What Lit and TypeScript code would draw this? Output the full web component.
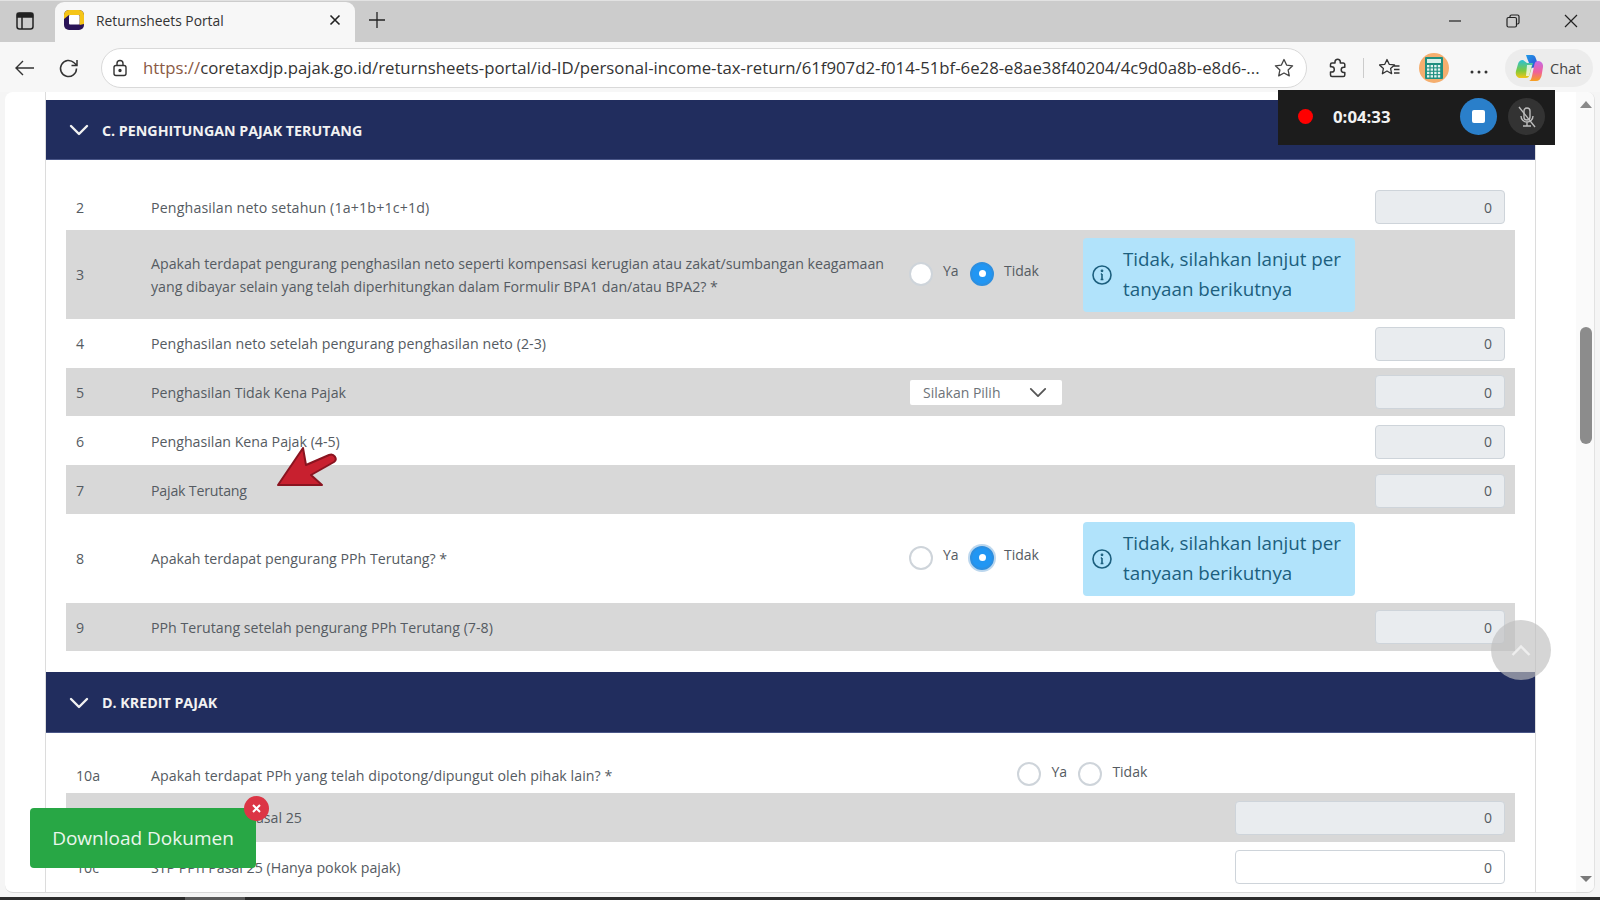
import { LitElement, html, css, svg } from "lit";
import { customElement } from "lit/decorators.js";

const chevron = (w: number, c: string, sw: number) => html`<svg width=${w} height=${Math.round(w * 0.6)} viewBox="0 0 20 12" fill="none" stroke=${c} stroke-width=${sw} stroke-linecap="round" stroke-linejoin="round"><path d="M2 2l8 8 8-8"/></svg>`;

const radio = (on: boolean, glow = false) => html`<span class="radio ${on ? "on" : ""} ${glow ? "glow" : ""}"></span>`;

const radios = (cls: string, glow = false, none = false) => html`<div class="radios ${cls}">
  ${radio(false)}<span class="opt ya">Ya</span>
  ${radio(!none, glow)}<span class="opt">Tidak</span>
</div>`;

const info = html`<div class="info">
  <svg width="20" height="20" viewBox="0 0 20 20" fill="none" stroke="#1c5f7e" stroke-width="1.6"><circle cx="10" cy="10" r="9"/><path d="M10 9v5.500M8.600 14.500h2.800M8.800 9h1.200"/><circle cx="10" cy="5.800" r=".6" fill="#1c5f7e"/></svg>
  <span>Tidak, silahkan lanjut per tanyaan berikutnya</span>
</div>`;

const field = (wide = false, enabled = false) => html`<div class="field ${wide ? "wide" : ""} ${enabled ? "enabled" : ""}">0</div>`;

@customElement("app-root")
export class AppRoot extends LitElement {
  static styles = css`
    :host { display: block; width: 1600px; height: 900px; overflow: hidden; position: relative; background: #f5f5f5; font-family: "Open Sans", "Noto Sans", sans-serif; color: #555b62; }
    * { box-sizing: border-box; }
    .shell { display: flex; flex-direction: column; height: 900px; }
    .tabs { height: 42px; background: #cccccc; display: flex; align-items: flex-end; flex: none; border-top: 1px solid #e2e2e2; }
    .tab-side { width: 55px; height: 41px; display: flex; align-items: center; justify-content: center; padding: 0 5px 2px 0; }
    .tab { width: 300px; height: 40px; background: #f7f7f7; border-radius: 9px 9px 0 0; display: flex; align-items: center; padding: 0 14px 4px 9px; font-size: 13.8px; color: #333; }
    .tab .title { margin-left: 12px; flex: 1; }
    .plus { width: 44px; height: 41px; display: flex; align-items: center; justify-content: center; padding-bottom: 3px; }
    .win { margin-left: auto; display: flex; height: 41px; align-items: center; padding: 0 22px 2px 0; gap: 44px; }
    .toolbar { height: 50px; flex: none; background: #f7f7f7; display: flex; align-items: center; padding: 2px 6px 0 14px; }
    .nav { display: flex; align-items: center; gap: 23px; width: 87px; }
    .url { width: 1206px; height: 40px; border: 1px solid #d9d9d9; border-radius: 20px; background: #fff; display: flex; align-items: center; padding: 0 14px 0 10px; font-size: 16.75px; color: #333; white-space: nowrap; }
    .url svg:first-child { flex: none; }
    .url .addr { margin-left: 15px; width: 1118px; overflow: hidden; flex: none; padding-bottom: 2px; }
    .url .addr b { font-weight: 400; color: #8a5a44; }
    .url .star { margin-left: 13px; flex: none; }
    .tools { display: flex; align-items: center; margin-left: 21px; flex: 1; }
    .divider { width: 1px; height: 20px; background: #ccc; margin: 0 15px; }
    .calc { width: 30px; height: 30px; border-radius: 50%; background: #f5ae6e; display: flex; align-items: center; justify-content: center; margin-left: 19px; }
    .dots { margin-left: 21px; }
    .chat { margin-left: 17px; width: 88px; height: 38px; border-radius: 19px; background: #ececec; display: flex; align-items: center; padding-left: 10px; gap: 7px; font-size: 14.5px; color: #444; }
    .page { flex: 1; margin: 0 5px 7px; background: #fff; border-radius: 8px; border-bottom: 1px solid #d8d8d8; border-right: 1px solid #e2e2e2; overflow: hidden; display: flex; min-height: 0; }
    .gutter { width: 40px; flex: none; }
    .content { width: 1491px; flex: none; border-left: 1px solid #dcdcdc; border-right: 1px solid #dcdcdc; padding-top: 8px; background: #fff; }
    .scroll { flex: 1; position: relative; background: linear-gradient(to right, #fff 40px, #fafafa 40px); }
    .sec { height: 60px; background: #212d5e; border-bottom: 1px solid #4a5687; display: flex; align-items: center; padding: 1px 0 0 23px; gap: 13px; color: #f2f2f2; font-weight: 700; font-size: 14.25px; }
    .sec.d61 { height: 61px; }
    .rows { padding: 0 20px; }
    .row { display: flex; align-items: center; font-size: 14.2px; line-height: 23px; padding: 0 10px 0 10px; min-height: 48px; color: #555b62; }
    .row.g { background: #d8d8d8; }
    .num { width: 75px; flex: none; }
    .label { width: 759px; flex: none; padding-right: 20px; }
    .label.long { width: auto; flex: none; padding-right: 0; }
    .ls-a { letter-spacing: .16px; }
    .ls-b { letter-spacing: .06px; }
    .ls-c { letter-spacing: -.2px; }
    .first { height: 70px; padding-top: 24px; }
    .tall { height: 89px; }
    .t48 { height: 49px; }
    .pt { padding-top: 2px; }
    .d { height: 60px; padding-top: 24px; }
    .t50 { height: 50px; }
    .radios { display: flex; align-items: center; font-size: 14px; width: 173px; flex: none; margin-left: -1px; }
    .radios.solo { width: auto; margin-left: 405px; }
    .radio { width: 24px; height: 24px; border-radius: 50%; background: #fff; border: 2px solid #ced4da; display: block; flex: none; margin-bottom: 2px; }
    .radio.on { background: #2196f3; border: 2px solid #2d8fe0; display: flex; align-items: center; justify-content: center; }
    .radio.on::after { content: ""; width: 7px; height: 7px; border-radius: 50%; background: #fff; }
    .radio.glow { box-shadow: 0 0 0 2px #bcd7ee; }
    .opt { margin-left: 10px; margin-top: -8px; }
    .opt.ya { width: 27px; margin-left: 10px; }
    .info { width: 272px; height: 74px; background: #b1e3fb; border-radius: 4px; display: flex; align-items: center; padding: 0 10px 0 9px; gap: 11px; color: #1c5f7e; font-size: 18.8px; line-height: 30px; flex: none; margin-left: 1px; }
    .info svg { flex: none; }
    .info span { padding-bottom: 2px; }
    .select { width: 152px; height: 25px; background: #fff; border-radius: 2px; display: flex; align-items: center; justify-content: space-between; padding: 0 15px 0 13px; color: #6d7378; font-size: 14px; flex: none; }
    .field { margin-left: auto; width: 130px; height: 34px; background: #e9ecef; border: 1px solid #ced4da; border-radius: 4px; display: flex; align-items: center; justify-content: flex-end; padding-right: 12px; font-size: 14px; color: #555b62; flex: none; }
    .field.wide { width: 270px; }
    .field.enabled { background: #fff; }
    .rec { position: absolute; left: 1278px; top: 90px; width: 277px; height: 55px; background: #1c1c1c; display: flex; align-items: center; padding: 0 0 2px 20px; color: #f2f2f2; font-weight: 700; font-size: 16.8px; }
    .rec .dot { width: 15px; height: 15px; border-radius: 50%; background: #f00; }
    .rec .time { margin-left: 20px; width: 127px; }
    .rec .stop { width: 37px; height: 37px; border-radius: 50%; background: #2a7fca; display: flex; align-items: center; justify-content: center; }
    .rec .stop i { width: 13px; height: 13px; background: #fff; border-radius: 2px; display: block; }
    .rec .mic { width: 37px; height: 37px; border-radius: 50%; background: #333; margin-left: 11px; display: flex; align-items: center; justify-content: center; }
    .totop { position: absolute; left: 1491px; top: 620px; width: 60px; height: 60px; border-radius: 50%; background: rgba(190,190,190,.65); display: flex; align-items: center; justify-content: center; }
    .dl { position: absolute; left: 30px; top: 808px; width: 226px; height: 60px; background: #28a745; border-radius: 4px; color: #eaf6ec; font-size: 19px; display: flex; align-items: center; justify-content: center; }
    .x { position: absolute; left: 244px; top: 796px; width: 25px; height: 25px; border-radius: 50%; background: #dc3545; display: flex; align-items: center; justify-content: center; }
    .arrow { position: absolute; left: 270px; top: 440px; }
    .sb-up, .sb-down { position: absolute; right: 2px; width: 0; height: 0; border-left: 6px solid transparent; border-right: 6px solid transparent; }
    .sb-up { top: 9px; border-bottom: 7px solid #8a8a8a; }
    .sb-down { bottom: 10px; border-top: 6px solid #7a7a7a; }
    .thumb { position: absolute; right: 2px; top: 235px; width: 12px; height: 117px; background: #8c8c8c; border-radius: 6px; }
    .taskbar { position: absolute; left: 0; right: 0; bottom: 0; height: 3px; background: #2b2b2b; display: flex; }
    .taskbar i { display: block; width: 60px; margin-left: 185px; background: #5a5a5a; }
  `;

  render() {
    const ic = "#333";
    return html`<div class="shell">
      <div class="tabs">
        <div class="tab-side"><svg width="18" height="18" viewBox="0 0 18 18" fill="none" stroke="#222" stroke-width="1.5"><rect x="1" y="1" width="16" height="16" rx="2.500"/><path d="M6 5v12"/><path d="M1.500 1.500h15v3.500h-15z" fill="#222"/></svg></div>
        <div class="tab">
          <svg width="20" height="20" viewBox="0 0 20 20"><rect width="20" height="20" rx="5" fill="#2a1458"/><path d="M0 9V5a5 5 0 015-5h10a5 5 0 015 5v9l-4.500 1V5H5z" fill="#f5c518"/><rect x="5" y="5" width="10.500" height="9.500" rx="1" fill="#fff"/></svg>
          <span class="title">Returnsheets Portal</span>
          <svg width="12" height="12" viewBox="0 0 12 12" stroke="#222" stroke-width="1.6"><path d="M1.500 1.500l9 9M10.500 1.500l-9 9"/></svg>
        </div>
        <div class="plus"><svg width="18" height="18" viewBox="0 0 18 18" stroke="#222" stroke-width="1.3"><path d="M9 1v16M1 9h16"/></svg></div>
        <div class="win">
          <svg width="14" height="14" viewBox="0 0 14 14" stroke="#222" stroke-width="1.2"><path d="M1 7h12"/></svg>
          <svg width="14" height="14" viewBox="0 0 14 14" fill="none" stroke="#222" stroke-width="1.2"><rect x="1" y="3.500" width="9.500" height="9.500" rx="1.500"/><path d="M4 3V2.500A1.500 1.500 0 015.500 1h6A1.500 1.500 0 0113 2.500v6a1.500 1.500 0 01-1.500 1.500H11"/></svg>
          <svg width="14" height="14" viewBox="0 0 14 14" stroke="#222" stroke-width="1.2"><path d="M1 1l12 12M13 1L1 13"/></svg>
        </div>
      </div>
      <div class="toolbar">
        <div class="nav">
          <svg width="21" height="18" viewBox="0 0 21 18" fill="none" stroke=${ic} stroke-width="1.4"><path d="M20 9H2M9 2L2 9l7 7"/></svg>
          <svg width="21" height="21" viewBox="0 0 21 21" fill="none" stroke=${ic} stroke-width="1.5"><path d="M18.500 10.500a8 8 0 11-2.400-5.700L19 7.500M19 2v5.500h-5.500"/></svg>
        </div>
        <div class="url">
          <svg width="16" height="18" viewBox="0 0 16 18" fill="none" stroke="#333" stroke-width="1.4"><rect x="2" y="6.500" width="12" height="10" rx="2"/><path d="M5 6.500V4.500a3 3 0 016 0v2"/><circle cx="8" cy="11.500" r="1" fill="#333"/></svg>
          <span class="addr"><b>https://</b>coretaxdjp.pajak.go.id/returnsheets-portal/id-ID/personal-income-tax-return/61f907d2-f014-51bf-6e28-e8ae38f40204/4c9d0a8b-e8d6-...</span>
          <svg class="star" width="20" height="20" viewBox="0 0 20 20" fill="none" stroke="#444" stroke-width="1.3" stroke-linejoin="round"><path d="M10 1.500l2.600 5.600 6 .7-4.500 4.100 1.200 6L10 15l-5.300 2.900 1.200-6L1.400 7.800l6-.7z"/></svg>
        </div>
        <div class="tools">
          <svg width="20" height="21" viewBox="0 0 20 21" fill="none" stroke="#333" stroke-width="1.5" stroke-linejoin="round"><path d="M7 3.500a2.700 2.700 0 015.300 0V5h3a1.500 1.500 0 011.500 1.500v2.700h-1a2.600 2.600 0 000 5.200h1v2.600a1.500 1.500 0 01-1.500 1.500H4a1.500 1.500 0 01-1.500-1.500v-3h1.200a2.600 2.600 0 000-5.200H2.500V6.500A1.500 1.500 0 014 5h3z"/></svg>
          <div class="divider"></div>
          <svg width="21" height="20" viewBox="0 0 21 20" fill="none" stroke="#333" stroke-width="1.3" stroke-linejoin="round"><path d="M8 1.500l2.200 4.800 5.300.6-3.900 3.600 1 5.200L8 13l-4.600 2.700 1-5.200L.5 6.900l5.300-.6zM15 8h5.500M15 11.500h5.500M15 15h5.500"/></svg>
          <div class="calc"><svg width="18" height="22" viewBox="0 0 18 22"><rect width="18" height="22" rx="1" fill="#1f8f7f"/><rect x="2" y="2" width="14" height="4" fill="#d8f0ea"/>${[0, 1, 2, 3].map((r) => [0, 1, 2, 3].map((c) => svg`<rect x=${2 + c * 3.6} y=${8 + r * 3.4} width="2.400" height="2.300" fill="#e4f4f0"/>`))}</svg></div>
          <div class="dots"><svg width="18" height="4" viewBox="0 0 18 4" fill="#333"><circle cx="2" cy="2" r="1.500"/><circle cx="9" cy="2" r="1.500"/><circle cx="16" cy="2" r="1.500"/></svg></div>
          <div class="chat">
            <svg width="28" height="28" viewBox="0 0 28 28"><defs><linearGradient id="cp1" x1="0" y1="0" x2="1" y2="1"><stop offset="0" stop-color="#1f9be8"/><stop offset=".7" stop-color="#2a5fd8"/><stop offset="1" stop-color="#7a4fe0"/></linearGradient><linearGradient id="cp2" x1="0" y1="0" x2="0" y2="1"><stop offset="0" stop-color="#c46be8"/><stop offset=".55" stop-color="#f0609a"/><stop offset="1" stop-color="#f7a11d"/></linearGradient><linearGradient id="cp3" x1="0" y1="0" x2="0" y2="1"><stop offset="0" stop-color="#28c0d8"/><stop offset=".6" stop-color="#7fca3c"/><stop offset="1" stop-color="#f5c518"/></linearGradient></defs><path d="M11 1h6c2 0 3 1 3.500 2.500L24 13l-8 1-4-10z" fill="url(#cp1)"/><path d="M8 6C5 6 3.500 8 3 10L1 17c-1 4 1 7 4.500 7H11c2 0 3-1 3.500-3L18 9h-6z" fill="url(#cp3)"/><path d="M14 27h7c3 0 4.500-2 5.500-5L28 13c.5-3-1.500-6-5-6-2 0-3 1-3.500 3L17 22c-.5 2.500-1.500 5-3 5z" fill="url(#cp2)"/><path d="M12 11h5l-3 11h-3z" fill="#fff" opacity=".75"/></svg>
            <span>Chat</span>
          </div>
        </div>
      </div>
      <div class="page">
        <div class="gutter"></div>
        <div class="content">
          <div class="sec">${chevron(20, "#f2f2f2", 2.4)}<span>C. PENGHITUNGAN PAJAK TERUTANG</span></div>
          <div class="rows">
            <div class="row first"><span class="num">2</span><span class="label ls-a">Penghasilan neto setahun (1a+1b+1c+1d)</span>${field()}</div>
            <div class="row g tall"><span class="num">3</span><span class="label">Apakah terdapat pengurang penghasilan neto seperti kompensasi kerugian atau zakat/sumbangan keagamaan yang dibayar selain yang telah diperhitungkan dalam Formulir BPA1 dan/atau BPA2? *</span>${radios("")}${info}</div>
            <div class="row t48"><span class="num">4</span><span class="label ls-b">Penghasilan neto setelah pengurang penghasilan neto (2-3)</span>${field()}</div>
            <div class="row g"><span class="num">5</span><span class="label">Penghasilan Tidak Kena Pajak</span><div class="select"><span>Silakan Pilih</span>${chevron(18, "#555", 2)}</div>${field()}</div>
            <div class="row t48 pt"><span class="num">6</span><span class="label">Penghasilan Kena Pajak (4-5)</span>${field()}</div>
            <div class="row g t48 pt"><span class="num">7</span><span class="label ls-c">Pajak Terutang</span>${field()}</div>
            <div class="row tall"><span class="num">8</span><span class="label">Apakah terdapat pengurang PPh Terutang? *</span>${radios("", true)}${info}</div>
            <div class="row g"><span class="num">9</span><span class="label">PPh Terutang setelah pengurang PPh Terutang (7-8)</span>${field()}</div>
          </div>
          <div style="height:21px"></div>
          <div class="sec d61">${chevron(20, "#f2f2f2", 2.4)}<span>D. KREDIT PAJAK</span></div>
          <div class="rows">
            <div class="row d"><span class="num">10a</span><span class="label long ls-b">Apakah terdapat PPh yang telah dipotong/dipungut oleh pihak lain? *</span>${radios("solo", false, true)}</div>
            <div class="row g t48"><span class="num">10b</span><span class="label long">Angsuran PPh Pasal 25</span>${field(true)}</div>
            <div class="row t50"><span class="num">10c</span><span class="label long">STP PPh Pasal 25 (Hanya pokok pajak)</span>${field(true, true)}</div>
            <div class="row g"></div>
          </div>
        </div>
        <div class="scroll"><div class="sb-up"></div><div class="thumb"></div><div class="sb-down"></div></div>
      </div>
    </div>
    <div class="rec"><span class="dot"></span><span class="time">0:04:33</span><span class="stop"><i></i></span><span class="mic"><svg width="22" height="24" viewBox="0 0 22 24" fill="none" stroke="#bdbdbd" stroke-width="1.4"><rect x="8" y="3" width="6" height="12" rx="3"/><path d="M5 11a6 6 0 0012 0M11 17v4M7 21h8M3 2l16 20"/></svg></span></div>
    <svg class="arrow" width="70" height="50" viewBox="0 0 70 50"><path d="M33 8L8 45h44l-11-10 23-13c4-3 0-9-5-7L36 25z" fill="#c8202f" stroke="#8a1420" stroke-width="2" stroke-linejoin="round"/></svg>
    <div class="totop"><svg width="20" height="12" viewBox="0 0 20 12" fill="none" stroke="#eee" stroke-width="2.4"><path d="M1.500 11L10 2.500 18.500 11"/></svg></div>
    <div class="dl">Download Dokumen</div>
    <div class="x"><svg width="9" height="9" viewBox="0 0 9 9" stroke="#fff" stroke-width="2"><path d="M1 1l7 7M8 1L1 8"/></svg></div>
    <div class="taskbar"><i></i></div>`;
  }
}
